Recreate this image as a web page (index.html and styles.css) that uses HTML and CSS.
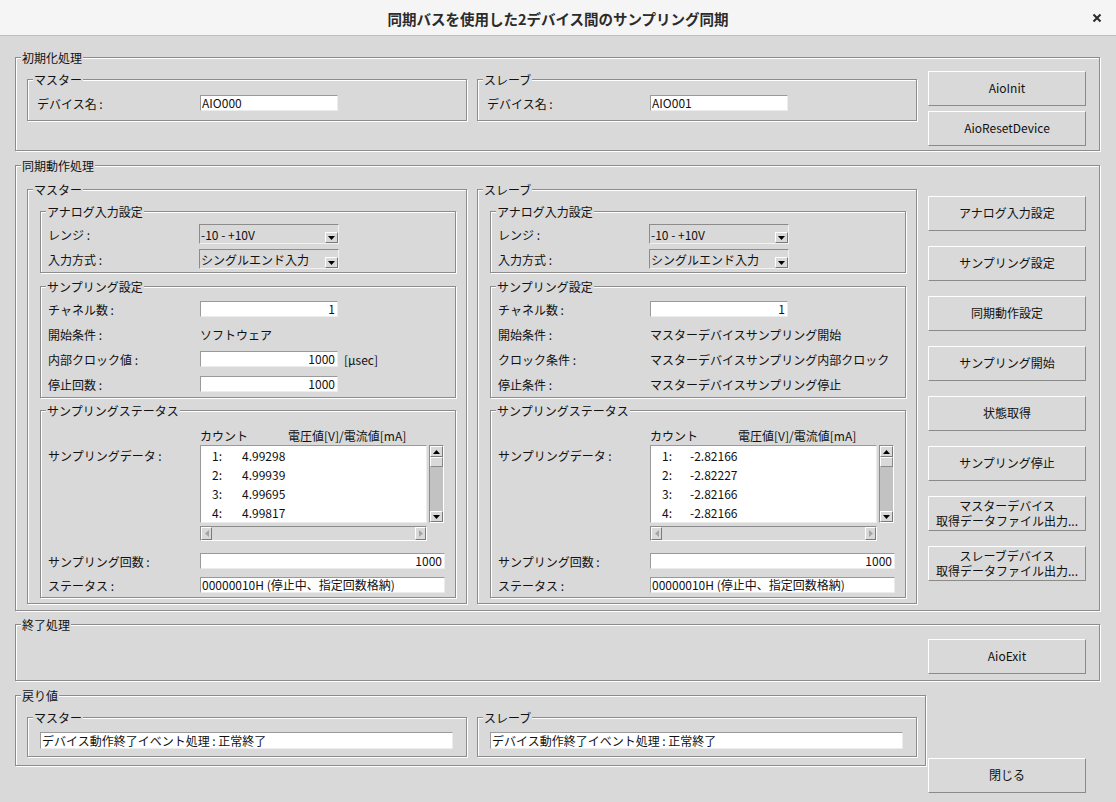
FILE: index.html
```html
<!DOCTYPE html>
<html lang="ja">
<head>
	<meta charset="UTF-8">
	<title>同期バスを使用した2デバイス間のサンプリング同期</title>
	<link rel="stylesheet" href="styles.css">
</head>
<body>
<div class="window">
    <div class="titlebar">
        <span class="title">同期バスを使用した2デバイス間のサンプリング同期</span>
        <svg class="close" width="10" height="10" viewBox="0 0 10 10"><path d="M1.5 1.5 L8.5 8.5 M8.5 1.5 L1.5 8.5" stroke="#2a2a2a" stroke-width="2" fill="none"/></svg>
    </div>

    <div class="content">
        <!-- 初期化処理 -->
        <div class="grp outer init">
            <span class="grp-title">初期化処理</span>
            <div class="grp sub">
                <span class="grp-title">マスター</span>
                <div class="row"><span class="lbl">デバイス名 :</span><span class="field">AIO000</span></div>
            </div>
            <div class="grp sub">
                <span class="grp-title">スレーブ</span>
                <div class="row"><span class="lbl">デバイス名 :</span><span class="field">AIO001</span></div>
            </div>
            <div class="btns">
                <button class="btn">AioInit</button>
                <button class="btn">AioResetDevice</button>
            </div>
        </div>

        <!-- 同期動作処理 -->
        <div class="grp outer sync">
            <span class="grp-title">同期動作処理</span>

            <div class="grp sub">
                <span class="grp-title">マスター</span>
                <div class="grp inner analog">
                    <span class="grp-title">アナログ入力設定</span>
                    <div class="row"><span class="lbl">レンジ :</span>
                        <span class="combo"><span class="combo-val">-10 - +10V</span><span class="combo-arrow"><svg width="7" height="4" viewBox="0 0 7 4"><polygon points="0,0 7,0 3.5,4" fill="#000"/></svg></span></span>
                    </div>
                    <div class="row"><span class="lbl">入力方式 :</span>
                        <span class="combo"><span class="combo-val">シングルエンド入力</span><span class="combo-arrow"><svg width="7" height="4" viewBox="0 0 7 4"><polygon points="0,0 7,0 3.5,4" fill="#000"/></svg></span></span>
                    </div>
                </div>
                <div class="grp inner settings">
                    <span class="grp-title">サンプリング設定</span>
                    <div class="row"><span class="lbl">チャネル数 :</span><span class="field num">1</span></div>
                    <div class="row"><span class="lbl">開始条件 :</span><span class="text">ソフトウェア</span></div>
                    <div class="row"><span class="lbl">内部クロック値 :</span><span class="field num">1000</span><span class="unit">[µsec]</span></div>
                    <div class="row"><span class="lbl">停止回数 :</span><span class="field num">1000</span></div>
                </div>
                <div class="grp inner status">
                    <span class="grp-title">サンプリングステータス</span>
                    <div class="row head"><span class="lbl"></span><span>カウント</span><span class="head-val">電圧値[V]/電流値[mA]</span></div>
                    <div class="data-row">
                        <span class="lbl">サンプリングデータ :</span>
                        <div class="list">
                            <div class="item"><span class="idx">1:</span><span class="val">4.99298</span></div>
                            <div class="item"><span class="idx">2:</span><span class="val">4.99939</span></div>
                            <div class="item"><span class="idx">3:</span><span class="val">4.99695</span></div>
                            <div class="item"><span class="idx">4:</span><span class="val">4.99817</span></div>
                        </div>
                        <div class="vscroll">
                            <span class="sb-btn"><svg width="7" height="4" viewBox="0 0 7 4"><polygon points="0,4 7,4 3.5,0" fill="#000"/></svg></span>
                            <span class="thumb"></span>
                            <span class="track"></span>
                            <span class="sb-btn"><svg width="7" height="4" viewBox="0 0 7 4"><polygon points="0,0 7,0 3.5,4" fill="#000"/></svg></span>
                        </div>
                    </div>
                    <div class="hrow">
                        <div class="hscroll">
                            <span class="sb-btn h"><svg width="4" height="7" viewBox="0 0 4 7"><polygon points="4,0 4,7 0,3.5" fill="#a4a4a4"/></svg></span>
                            <span class="track"></span>
                            <span class="sb-btn h"><svg width="4" height="7" viewBox="0 0 4 7"><polygon points="0,0 0,7 4,3.5" fill="#a4a4a4"/></svg></span>
                        </div>
                    </div>
                    <div class="row count"><span class="lbl">サンプリング回数 :</span><span class="field num wide">1000</span></div>
                    <div class="row stat"><span class="lbl">ステータス :</span><span class="field wide">00000010H (停止中、指定回数格納)</span></div>
                </div>
            </div>

            <div class="grp sub">
                <span class="grp-title">スレーブ</span>
                <div class="grp inner analog">
                    <span class="grp-title">アナログ入力設定</span>
                    <div class="row"><span class="lbl">レンジ :</span>
                        <span class="combo"><span class="combo-val">-10 - +10V</span><span class="combo-arrow"><svg width="7" height="4" viewBox="0 0 7 4"><polygon points="0,0 7,0 3.5,4" fill="#000"/></svg></span></span>
                    </div>
                    <div class="row"><span class="lbl">入力方式 :</span>
                        <span class="combo"><span class="combo-val">シングルエンド入力</span><span class="combo-arrow"><svg width="7" height="4" viewBox="0 0 7 4"><polygon points="0,0 7,0 3.5,4" fill="#000"/></svg></span></span>
                    </div>
                </div>
                <div class="grp inner settings">
                    <span class="grp-title">サンプリング設定</span>
                    <div class="row"><span class="lbl">チャネル数 :</span><span class="field num">1</span></div>
                    <div class="row"><span class="lbl">開始条件 :</span><span class="text">マスターデバイスサンプリング開始</span></div>
                    <div class="row"><span class="lbl">クロック条件 :</span><span class="text">マスターデバイスサンプリング内部クロック</span></div>
                    <div class="row"><span class="lbl">停止条件 :</span><span class="text">マスターデバイスサンプリング停止</span></div>
                </div>
                <div class="grp inner status">
                    <span class="grp-title">サンプリングステータス</span>
                    <div class="row head"><span class="lbl"></span><span>カウント</span><span class="head-val">電圧値[V]/電流値[mA]</span></div>
                    <div class="data-row">
                        <span class="lbl">サンプリングデータ :</span>
                        <div class="list">
                            <div class="item"><span class="idx">1:</span><span class="val neg">-2.82166</span></div>
                            <div class="item"><span class="idx">2:</span><span class="val neg">-2.82227</span></div>
                            <div class="item"><span class="idx">3:</span><span class="val neg">-2.82166</span></div>
                            <div class="item"><span class="idx">4:</span><span class="val neg">-2.82166</span></div>
                        </div>
                        <div class="vscroll">
                            <span class="sb-btn"><svg width="7" height="4" viewBox="0 0 7 4"><polygon points="0,4 7,4 3.5,0" fill="#000"/></svg></span>
                            <span class="thumb"></span>
                            <span class="track"></span>
                            <span class="sb-btn"><svg width="7" height="4" viewBox="0 0 7 4"><polygon points="0,0 7,0 3.5,4" fill="#000"/></svg></span>
                        </div>
                    </div>
                    <div class="hrow">
                        <div class="hscroll">
                            <span class="sb-btn h"><svg width="4" height="7" viewBox="0 0 4 7"><polygon points="4,0 4,7 0,3.5" fill="#a4a4a4"/></svg></span>
                            <span class="track"></span>
                            <span class="sb-btn h"><svg width="4" height="7" viewBox="0 0 4 7"><polygon points="0,0 0,7 4,3.5" fill="#a4a4a4"/></svg></span>
                        </div>
                    </div>
                    <div class="row count"><span class="lbl">サンプリング回数 :</span><span class="field num wide">1000</span></div>
                    <div class="row stat"><span class="lbl">ステータス :</span><span class="field wide">00000010H (停止中、指定回数格納)</span></div>
                </div>
            </div>

            <div class="btns">
                <button class="btn">アナログ入力設定</button>
                <button class="btn">サンプリング設定</button>
                <button class="btn">同期動作設定</button>
                <button class="btn">サンプリング開始</button>
                <button class="btn">状態取得</button>
                <button class="btn">サンプリング停止</button>
                <button class="btn">マスターデバイス<br>取得データファイル出力...</button>
                <button class="btn">スレーブデバイス<br>取得データファイル出力...</button>
            </div>
        </div>

        <!-- 終了処理 -->
        <div class="grp outer exit">
            <span class="grp-title">終了処理</span>
            <div class="btns">
                <button class="btn">AioExit</button>
            </div>
        </div>

        <!-- 戻り値 -->
        <div class="bottom">
            <div class="grp outer ret">
                <span class="grp-title">戻り値</span>
                <div class="grp sub">
                    <span class="grp-title">マスター</span>
                    <span class="field">デバイス動作終了イベント処理 : 正常終了</span>
                </div>
                <div class="grp sub">
                    <span class="grp-title">スレーブ</span>
                    <span class="field">デバイス動作終了イベント処理 : 正常終了</span>
                </div>
            </div>
            <button class="btn close-btn">閉じる</button>
        </div>
    </div>
</div>
</body>
</html>
```

FILE: styles.css
```css
body{
    margin: 0;
    background: #d9d9d9;
    font-family: "Noto Sans CJK JP", "Noto Sans", sans-serif;
    font-size: 12px;
    color: #111;
}
.window{
    width: 1116px;
    height: 802px;
    background: #d9d9d9;
    overflow: hidden;
}
.titlebar{
    height: 35px;
    border-bottom: 1px solid #bdbdbd;
    background: #f5f5f5;
    display: flex;
    align-items: center;
    justify-content: center;
    position: relative;
}
.title{
    font-size: 14.5px;
    font-weight: bold;
    color: #2b2b2b;
    padding-top: 2px;
}
.close{
    position: absolute;
    right: 14px;
    top: 13px;
}
.content{
    padding: 21px 0 0 15px;
}

/* etched group box */
.grp{
    position: relative;
    box-sizing: border-box;
    border: 1px solid #8c8c8c;
    box-shadow: inset 1px 1px 0 #fff, 1px 1px 0 #fff;
    flex: none;
}
.grp-title{
    position: absolute;
    top: -9px;
    left: 5px;
    padding: 0 1px;
    background: #d9d9d9;
    line-height: 17px;
    white-space: nowrap;
}

.outer{
    width: 1085px;
    display: flex;
    align-items: flex-start;
    padding: 0 13px 0 11px;
}
.init{
    height: 94px;
}
.sync{
    height: 446px;
    margin-top: 14px;
}
.exit{
    height: 57px;
    margin-top: 13px;
}
.bottom{
    display: flex;
    align-items: flex-start;
    margin-top: 14px;
}
.ret{
    width: 911px;
    height: 71px;
}

.sub{
    width: 440px;
}
.sub + .sub{
    margin-left: 10px;
}
.btns{
    width: 158px;
    margin-left: 11px;
    display: flex;
    flex-direction: column;
    flex: none;
}
.init .sub{
    margin-top: 21px;
    height: 42px;
    padding: 15px 0 0 9px;
}
.init .btns{
    margin-top: 13px;
    gap: 5px;
}
.sync .sub{
    margin-top: 23px;
    height: 415px;
    padding: 21px 10px 0 12px;
}
.sync .btns{
    margin-top: 30px;
    gap: 15px;
}
.exit .btns{
    margin-left: auto;
    margin-top: 14px;
}
.ret .sub{
    margin-top: 21px;
    height: 40px;
    padding: 14px 0 0 12px;
}

.btn{
    width: 158px;
    height: 35px;
    box-sizing: border-box;
    padding: 0 0 2px;
    background: #d9d9d9;
    border: 1px solid;
    border-color: #fff #8a8a8a #8a8a8a #fff;
    font: inherit;
    color: inherit;
    line-height: 15px;
    white-space: nowrap;
}
.close-btn{
    flex: none;
    margin: 63px 0 0 2px;
}

/* inner groups */
.inner{
    width: 416px;
    padding-left: 7px;
}
.analog{
    height: 62px;
    padding-top: 12px;
}
.settings{
    height: 112px;
    margin-top: 13px;
    padding-top: 14px;
}
.status{
    height: 188px;
    margin-top: 12px;
    padding-top: 16px;
}

.row{
    display: flex;
    align-items: center;
    height: 16px;
}
.analog .row{
    height: 20px;
}
.analog .row + .row{
    margin-top: 5px;
}
.settings .row + .row{
    margin-top: 9px;
}
.lbl{
    width: 152px;
    flex: none;
    white-space: nowrap;
}
.init .lbl{
    width: 163px;
}
.text{
    white-space: nowrap;
}
.unit{
    margin-left: 6px;
}

.field{
    display: block;
    box-sizing: border-box;
    width: 138px;
    height: 16px;
    background: #fff;
    border: 1px solid;
    border-color: #9a9a9a #ececec #ececec #9a9a9a;
    padding: 0 2px 0 1px;
    line-height: 14px;
    white-space: nowrap;
    overflow: hidden;
    flex: none;
}
.num{
    text-align: right;
}
.wide{
    width: 245px;
}
.ret .field{
    width: 413px;
    height: 17px;
    line-height: 15px;
}

.combo{
    width: 140px;
    height: 20px;
    margin-left: -1px;
    box-sizing: border-box;
    display: flex;
    align-items: center;
    border: 1px solid;
    border-color: #8c8c8c #f2f2f2 #f2f2f2 #8c8c8c;
    padding-left: 1px;
}
.combo-val{
    flex: 1;
    white-space: nowrap;
}
.combo-arrow{
    width: 13px;
    height: 11px;
    align-self: flex-end;
    box-sizing: border-box;
    border: 1px solid;
    border-color: #fff #7a7a7a #7a7a7a #fff;
    display: flex;
    align-items: center;
    justify-content: center;
    padding-top: 1px;
}

/* sampling data list */
.head-val{
    margin-left: 40px;
}
.data-row{
    display: flex;
    align-items: flex-start;
    margin-top: 2px;
}
.data-row .lbl{
    line-height: 19px;
    padding-top: 1px;
}
.list{
    width: 227px;
    height: 78px;
    box-sizing: border-box;
    background: #fff;
    border: 1px solid;
    border-color: #9a9a9a #ececec #ececec #9a9a9a;
    overflow: hidden;
}
.item{
    display: flex;
    height: 19px;
    line-height: 19px;
}
.idx{
    width: 21px;
    text-align: right;
}
.val{
    margin-left: 20px;
}
.val.neg{
    margin-left: 18px;
}
.vscroll{
    width: 15px;
    height: 78px;
    margin-left: 2px;
    box-sizing: border-box;
    border: 1px solid;
    border-color: #8c8c8c #fff #fff #8c8c8c;
    background: #c2c2c2;
    display: flex;
    flex-direction: column;
}
.sb-btn{
    width: 13px;
    height: 11px;
    box-sizing: border-box;
    background: #d9d9d9;
    border: 1px solid;
    border-color: #fff #7a7a7a #7a7a7a #fff;
    display: flex;
    align-items: center;
    justify-content: center;
    flex: none;
}
.thumb{
    height: 10px;
    box-sizing: border-box;
    background: #d9d9d9;
    border: 1px solid;
    border-color: #fff #8a8a8a #8a8a8a #fff;
    flex: none;
}
.track{
    flex: 1;
}
.hrow{
    margin-top: 3px;
    padding-left: 152px;
}
.hscroll{
    width: 227px;
    height: 15px;
    box-sizing: border-box;
    border: 1px solid;
    border-color: #8c8c8c #fff #fff #8c8c8c;
    display: flex;
}
.sb-btn.h{
    width: 11px;
    height: 13px;
}
.count{
    margin-top: 12px;
}
.stat{
    margin-top: 8px;
}
```
